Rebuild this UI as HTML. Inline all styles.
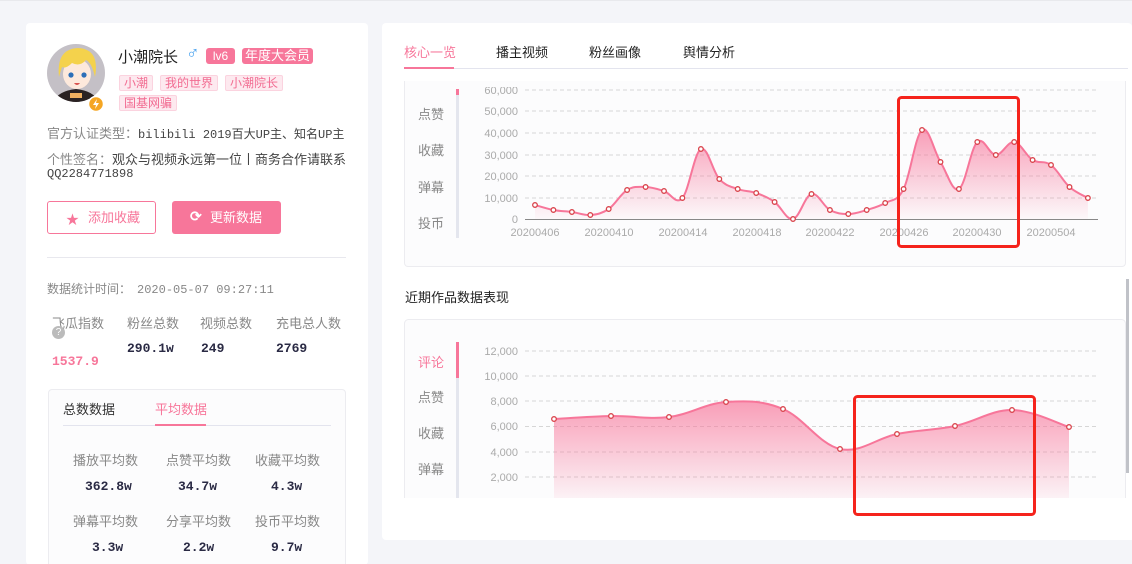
<!DOCTYPE html>
<html><head><meta charset="utf-8">
<style>
*{margin:0;padding:0;box-sizing:border-box}
html{width:1132px;height:564px;overflow:hidden}
body{width:1132px;height:564px;background:#f4f5f9;position:relative;overflow:hidden;font-family:"Liberation Sans","Noto Sans CJK SC",sans-serif;color:#333;border-top:1px solid #e8e9ed}
.a{position:absolute;white-space:nowrap}
.card{position:absolute;background:#fff;border-radius:4px}
.tag{position:absolute;height:16px;line-height:15px;font-size:12px;padding:0 4px;background:#fde9ef;border:1px solid #fbd3df;color:#f26c92;border-radius:2px}
.g{color:#777;font-size:13px}
.m{font-family:"Liberation Mono","Noto Sans CJK SC",monospace;font-size:12px}
.v{font-family:"Liberation Mono",monospace;font-weight:bold;font-size:13px;color:#2a2a44}
.lab{color:#888;font-size:13px}
</style></head><body>
<div class="card" style="left:26px;top:22px;width:342px;height:542px"></div>
<div class="card" style="left:382px;top:22px;width:750px;height:517px"></div>

<!-- avatar -->
<svg class="a" style="left:46px;top:42px" width="62" height="72" viewBox="0 0 62 72">
<defs><clipPath id="av"><circle cx="30" cy="30" r="29"/></clipPath></defs>
<circle cx="30" cy="30" r="29" fill="#c4c0c6"/>
<g clip-path="url(#av)">
<path d="M6 62 Q10 48 30 46 Q50 48 54 62Z" fill="#2a2222"/>
<rect x="24" y="50" width="12" height="5" fill="#f0b060"/>
<ellipse cx="31" cy="31" rx="14" ry="15" fill="#fde9dc"/>
<path d="M13 34 Q10 6 32 5 Q54 6 49 34 Q46 20 40 17 Q34 24 26 20 Q20 26 16 24 Q14 30 13 34Z" fill="#f4d24c"/>
<circle cx="25" cy="32" r="2.6" fill="#2d6fb8"/><circle cx="38" cy="32" r="2.6" fill="#2d6fb8"/>
<path d="M28 40 Q31 44 34 40Z" fill="#d9534f"/>
</g>
<circle cx="50" cy="61" r="7.5" fill="#f5a623" stroke="#fff" stroke-width="1.5"/>
<path d="M51 56 L47 62 L50 62 L49 66 L53 60 L50 60Z" fill="#fff"/>
</svg>

<div class="a" style="left:118px;top:45px;font-size:15px;color:#222">小潮院长</div>
<div class="a" style="left:186px;top:42px;font-size:18px;color:#4aa3ef">♂</div>
<div class="a" style="left:206px;top:47px;width:29px;height:16px;background:#f7769a;color:#fff;font-size:12px;line-height:16px;text-align:center;border-radius:3px">lv6</div>
<div class="a" style="left:242px;top:47px;width:71px;height:16px;background:#f7769a;color:#fff;font-size:13px;line-height:16px;text-align:center;border-radius:3px">年度大会员</div>
<div class="tag" style="left:119px;top:74px">小潮</div>
<div class="tag" style="left:160px;top:74px">我的世界</div>
<div class="tag" style="left:225px;top:74px">小潮院长</div>
<div class="tag" style="left:119px;top:94px">国基网骗</div>

<div class="a g" style="left:47px;top:122px"><span style="color:#888">官方认证类型：</span><span class="m" style="color:#444">bilibili 2019百大UP主、知名UP主</span></div>
<div class="a g" style="left:47px;top:148px"><span style="color:#888">个性签名：</span><span style="color:#444">观众与视频永远第一位丨商务合作请联系</span></div>
<div class="a" style="left:47px;top:166px;font-size:12px;color:#444;font-family:'Liberation Mono',monospace">QQ2284771898</div>

<div class="a" style="left:47px;top:200px;width:109px;height:33px;border:1px solid #f7769a;border-radius:3px;color:#f7769a;font-size:13px;line-height:31px;padding-left:40px">添加收藏</div>
<div class="a" style="left:66px;top:208px;color:#f7769a;font-size:13px">★</div>
<div class="a" style="left:172px;top:200px;width:109px;height:33px;background:#f7769a;border-radius:3px;color:#fff;font-size:13px;line-height:33px;padding-left:38px">更新数据</div>
<div class="a" style="left:190px;top:207px;color:#fff;font-size:14px;font-weight:bold">⟳</div>

<div class="a" style="left:47px;top:256px;width:299px;height:1px;background:#e8e8ee"></div>
<div class="a" style="left:47px;top:279px;font-size:12px;color:#888">数据统计时间：<span style="font-family:'Liberation Mono',monospace;margin-left:6px">2020-05-07 09:27:11</span></div>

<div class="a lab" style="left:52px;top:312px">飞瓜指数</div>
<div class="a" style="left:52px;top:325px;width:13px;height:13px;border-radius:50%;background:#bbb;color:#fff;font-size:10px;line-height:13px;text-align:center">?</div>
<div class="a lab" style="left:127px;top:312px">粉丝总数</div>
<div class="a lab" style="left:200px;top:312px">视频总数</div>
<div class="a lab" style="left:276px;top:312px">充电总人数</div>
<div class="a v" style="left:127px;top:340px">290.1w</div>
<div class="a v" style="left:201px;top:340px">249</div>
<div class="a v" style="left:276px;top:340px">2769</div>
<div class="a v" style="left:52px;top:353px;color:#f7769a">1537.9</div>

<div class="a" style="left:48px;top:388px;width:298px;height:190px;border:1px solid #ececf0;border-radius:4px;background:#fcfcfd"></div>
<div class="a" style="left:63px;top:398px;font-size:13px;color:#333">总数数据</div>
<div class="a" style="left:155px;top:398px;font-size:13px;color:#f7769a">平均数据</div>
<div class="a" style="left:63px;top:424px;width:268px;height:1px;background:#e3e4ee"></div>
<div class="a" style="left:155px;top:423px;width:51px;height:2px;background:#f7769a"></div>

<div class="a lab" style="left:73px;top:449px">播放平均数</div>
<div class="a lab" style="left:166px;top:449px">点赞平均数</div>
<div class="a lab" style="left:255px;top:449px">收藏平均数</div>
<div class="a v" style="left:85px;top:478px">362.8w</div>
<div class="a v" style="left:178px;top:478px">34.7w</div>
<div class="a v" style="left:271px;top:478px">4.3w</div>
<div class="a lab" style="left:73px;top:510px">弹幕平均数</div>
<div class="a lab" style="left:166px;top:510px">分享平均数</div>
<div class="a lab" style="left:255px;top:510px">投币平均数</div>
<div class="a v" style="left:92px;top:539px">3.3w</div>
<div class="a v" style="left:183px;top:539px">2.2w</div>
<div class="a v" style="left:271px;top:539px">9.7w</div>

<!-- right tabs -->
<div class="a" style="left:404px;top:41px;font-size:13px;color:#f7769a">核心一览</div>
<div class="a" style="left:496px;top:41px;font-size:13px;color:#222">播主视频</div>
<div class="a" style="left:589px;top:41px;font-size:13px;color:#222">粉丝画像</div>
<div class="a" style="left:683px;top:41px;font-size:13px;color:#222">舆情分析</div>
<div class="a" style="left:404px;top:67px;width:724px;height:1px;background:#e3e4ee"></div>
<div class="a" style="left:404px;top:66px;width:50px;height:2px;background:#f7769a"></div>

<!-- top chart box -->
<div class="a" style="left:404px;top:80px;width:722px;height:186px;border:1px solid #ececf0;border-top:none;border-radius:0 0 4px 4px;background:#fcfcfd"></div>
<div class="a lab" style="left:418px;top:103px">点赞</div>
<div class="a lab" style="left:418px;top:139px">收藏</div>
<div class="a lab" style="left:418px;top:176px">弹幕</div>
<div class="a lab" style="left:418px;top:212px">投币</div>
<div class="a" style="left:456px;top:88px;width:3px;height:149px;background:#e4e6ee"></div>
<div class="a" style="left:456px;top:88px;width:3px;height:6px;background:#f7769a"></div>

<svg class="a" style="left:0;top:0" width="1132" height="564">
<defs>
<linearGradient id="gr" x1="0" y1="0" x2="0" y2="1"><stop offset="0" stop-color="#f7769a" stop-opacity=".7"/><stop offset="1" stop-color="#f7769a" stop-opacity=".03"/></linearGradient>
<linearGradient id="gr2" x1="0" y1="0" x2="0" y2="1"><stop offset="0" stop-color="#f7769a" stop-opacity=".7"/><stop offset="1" stop-color="#f7769a" stop-opacity=".05"/></linearGradient>
<clipPath id="c1"><rect x="400" y="86" width="730" height="200"/></clipPath>
<clipPath id="c2"><rect x="400" y="330" width="730" height="167"/></clipPath>
</defs>
<g clip-path="url(#c1)" font-family="Liberation Sans,sans-serif" font-size="11" fill="#aaa">
<g stroke="#d6d6d6" stroke-dasharray="4,3">
<line x1="525" y1="89" x2="1098" y2="89"/><line x1="525" y1="110" x2="1098" y2="110"/><line x1="525" y1="132" x2="1098" y2="132"/><line x1="525" y1="154" x2="1098" y2="154"/><line x1="525" y1="175" x2="1098" y2="175"/><line x1="525" y1="197" x2="1098" y2="197"/>
</g>
<line x1="525" y1="218.5" x2="1098" y2="218.5" stroke="#888"/>
<g text-anchor="end">
<text x="518" y="93">60,000</text><text x="518" y="114">50,000</text><text x="518" y="136">40,000</text><text x="518" y="158">30,000</text><text x="518" y="179">20,000</text><text x="518" y="201">10,000</text><text x="518" y="222">0</text>
</g>
<g text-anchor="middle"><text x="535" y="235">20200406</text><text x="609" y="235">20200410</text><text x="683" y="235">20200414</text><text x="757" y="235">20200418</text><text x="830" y="235">20200422</text><text x="904" y="235">20200426</text><text x="977" y="235">20200430</text><text x="1051" y="235">20200504</text></g>
<path id="a1" fill="url(#gr)"/>
<path id="l1" fill="none" stroke="#f7769a" stroke-width="2"/>
<g id="d1" fill="#fff" stroke="#d9434b" stroke-width="1.3"></g>
</g>
<rect x="898.5" y="96.5" width="120" height="149" rx="3" fill="none" stroke="#f5231c" stroke-width="3"/>

<text x="405" y="301" font-size="13" fill="#222" font-family="Liberation Sans,Noto Sans CJK SC,sans-serif">近期作品数据表现</text>
<rect x="404.5" y="318.5" width="721" height="200" rx="4" fill="#fcfcfd" stroke="#ececf0"/>
<rect x="400" y="497" width="732" height="42" fill="#fff"/>
<rect x="1126" y="278" width="3" height="194" fill="#c0c2c8"/>
<g clip-path="url(#c2)" font-family="Liberation Sans,sans-serif" font-size="11" fill="#aaa">
<g stroke="#d6d6d6" stroke-dasharray="4,3">
<line x1="525" y1="350" x2="1098" y2="350"/><line x1="525" y1="375" x2="1098" y2="375"/><line x1="525" y1="400" x2="1098" y2="400"/><line x1="525" y1="425.5" x2="1098" y2="425.5"/><line x1="525" y1="451" x2="1098" y2="451"/><line x1="525" y1="476" x2="1098" y2="476"/>
</g>
<g text-anchor="end">
<text x="518" y="354">12,000</text><text x="518" y="379">10,000</text><text x="518" y="404">8,000</text><text x="518" y="429">6,000</text><text x="518" y="455">4,000</text><text x="518" y="480">2,000</text><text x="518" y="505">0</text>
</g>
<rect x="456" y="341" width="3" height="160" fill="#e4e6ee"/>
<rect x="456" y="341" width="3" height="36" fill="#f7769a"/>
<path id="a2" fill="url(#gr2)"/>
<path id="l2" fill="none" stroke="#f7769a" stroke-width="2"/>
<g id="d2" fill="#fff" stroke="#d9434b" stroke-width="1.3"></g>
</g>
<rect x="854.5" y="395.5" width="180" height="118" rx="3" fill="none" stroke="#f5231c" stroke-width="3"/>
</svg>
<div class="a" style="left:418px;top:351px;font-size:13px;color:#f7769a">评论</div>
<div class="a lab" style="left:418px;top:386px">点赞</div>
<div class="a lab" style="left:418px;top:422px">收藏</div>
<div class="a lab" style="left:418px;top:458px">弹幕</div>

<script>
function smooth(p){var d="M"+p[0][0]+" "+p[0][1];for(var i=0;i<p.length-1;i++){var p0=p[i-1]||p[i],p1=p[i],p2=p[i+1],p3=p[i+2]||p2;var t=0.18;d+=" C"+(p1[0]+(p2[0]-p0[0])*t).toFixed(1)+" "+(p1[1]+(p2[1]-p0[1])*t).toFixed(1)+" "+(p2[0]-(p3[0]-p1[0])*t).toFixed(1)+" "+(p2[1]-(p3[1]-p1[1])*t).toFixed(1)+" "+p2[0]+" "+p2[1];}return d;}
function draw(p,base,a,l,d){var s=smooth(p);document.getElementById(l).setAttribute("d",s);document.getElementById(a).setAttribute("d",s+" L"+p[p.length-1][0]+" "+base+" L"+p[0][0]+" "+base+"Z");var g=document.getElementById(d),h="";p.forEach(function(q){h+='<circle cx="'+q[0]+'" cy="'+q[1]+'" r="2.3"/>';});g.innerHTML=h;}
var y1=[204,209,211,214,208,189,186,190,197,148,178,188,192,201,218,193,209,213,209,202,188,129,161,188,141,154,141,159,164,186,197];
var p1=y1.map(function(v,i){return[+(535+i*18.43).toFixed(1),v];});
draw(p1,218,"a1","l1","d1");
draw([[554,418],[611,415],[669,416],[726,401],[783,408],[840,448],[897,433],[955,425],[1012,409],[1069,426]],501,"a2","l2","d2");
</script>
</body></html>
